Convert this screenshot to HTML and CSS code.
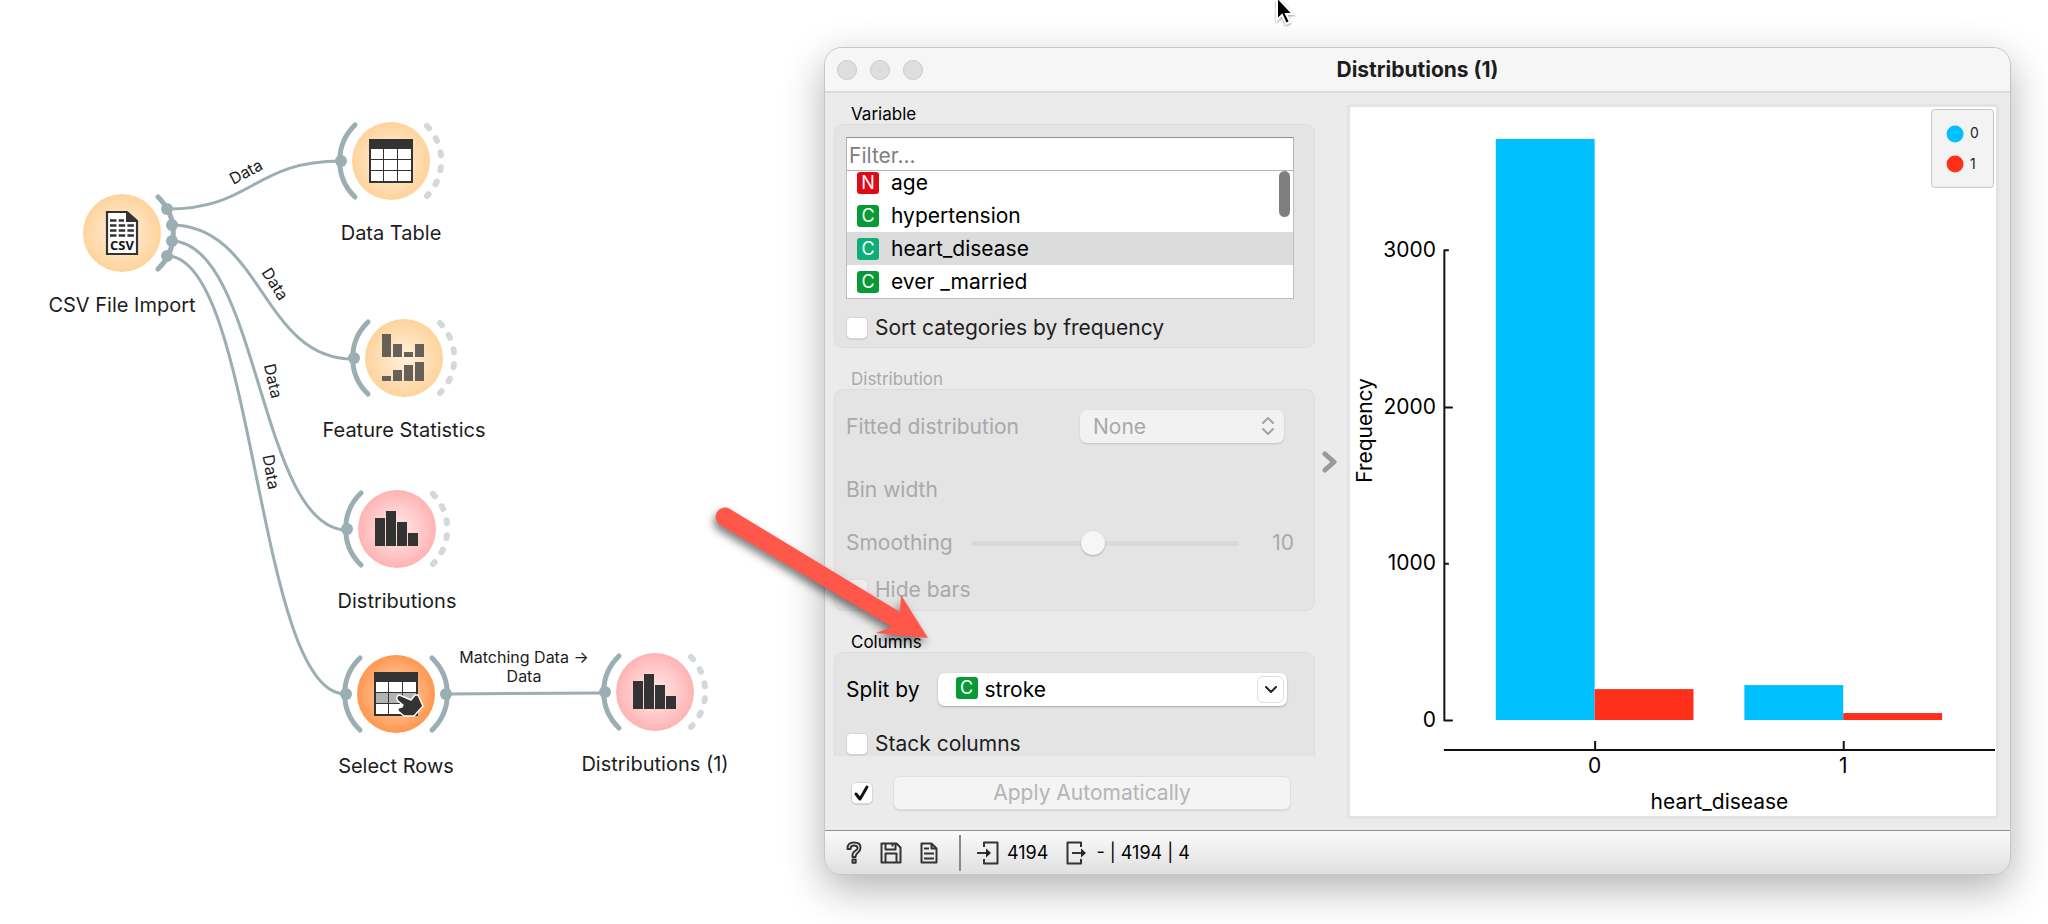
FILE: index.html
```html
<!DOCTYPE html>
<html lang="en">
<head>
<meta charset="utf-8">
<title>Distributions (1)</title>
<link rel="stylesheet" href="styles.css">
</head>
<body>
<main class="canvas">
  <svg class="defs" width="0" height="0" aria-hidden="true">
    <defs>
      <radialGradient id="g-data"><stop offset="0" stop-color="#fff0dc"/><stop offset="0.5" stop-color="#ffe2bd"/><stop offset="1" stop-color="#ffd39b"/></radialGradient>
      <radialGradient id="g-vis"><stop offset="0" stop-color="#ffe6e6"/><stop offset="0.5" stop-color="#ffd0d0"/><stop offset="1" stop-color="#ffb3b3"/></radialGradient>
      <radialGradient id="g-sel"><stop offset="0" stop-color="#ffd2ad"/><stop offset="0.5" stop-color="#ffb885"/><stop offset="1" stop-color="#ff9750"/></radialGradient>
      <g id="arc-in"><path class="arc" d="M24 14A50 50 0 0 0 24 86"/><circle class="dot" cx="10" cy="50" r="6"/></g>
      <path id="arc-empty" class="arc-empty" d="M96 15A50 50 0 0 1 96 85"/>
      <g id="bars" fill="#333"><rect x="38" y="39" width="10" height="28"/><rect x="49" y="32" width="10" height="35"/><rect x="60" y="43" width="10" height="24"/><rect x="71" y="54" width="10" height="13"/></g>
      <g id="sheet"><rect x="38" y="28" width="44" height="44" fill="#333"/><path fill="#fff" d="M40 38h12v10H40zM53 38h13v10H53zM67 38h13v10H67zM40 49h12v10H40zM53 49h13v10H53zM67 49h13v10H67zM40 60h12v10H40zM53 60h13v10H53zM67 60h13v10H67z"/></g>
    </defs>
  </svg>

  <svg class="links" width="820" height="924" aria-hidden="true">
    <path d="M167 209C253 209 253 161 341 161"/>
    <path d="M171 225C262 225 262 359 353 359"/>
    <path d="M171 241C259 241 259 530 347 530"/>
    <path d="M167 256C256 256 256 694 345 694"/>
    <path d="M446 694L604 693"/>
  </svg>

  <span class="link-label link-a">Data</span>
  <span class="link-label link-b">Data</span>
  <span class="link-label link-c">Data</span>
  <span class="link-label link-d">Data</span>
  <span class="link-label link-e">Matching Data →<br>Data</span>

  <figure class="node node-csv">
    <svg width="120" height="100" viewBox="0 0 120 100">
      <circle cx="60" cy="50" r="39" fill="url(#g-data)"/>
      <path class="arc" d="M96 14A50 50 0 0 1 96 86"/>
      <circle class="dot" cx="105" cy="26" r="6"/><circle class="dot" cx="110" cy="42" r="6"/><circle class="dot" cx="110" cy="58" r="6"/><circle class="dot" cx="105" cy="73" r="6"/>
      <path d="M45 29h20l10 9v33H45z" fill="#fff" stroke="#333" stroke-width="2.2"/>
      <path d="M64 28v11h12z" fill="#333"/>
      <path d="M48 37.500h14M48 42.500h24M48 47.500h24M48 52.500h24" stroke="#333" stroke-width="2.500" stroke-dasharray="6.500 2.200"/>
      <text class="csv-text" x="60" y="67" text-anchor="middle">CSV</text>
    </svg>
    <figcaption>CSV File Import</figcaption>
  </figure>

  <figure class="node node-table">
    <svg width="120" height="100" viewBox="0 0 120 100">
      <circle cx="60" cy="50" r="39" fill="url(#g-data)"/>
      <use href="#arc-in"/><use href="#arc-empty"/><use href="#sheet"/>
    </svg>
    <figcaption>Data Table</figcaption>
  </figure>

  <figure class="node node-stats">
    <svg width="120" height="100" viewBox="0 0 120 100">
      <circle cx="60" cy="50" r="39" fill="url(#g-data)"/>
      <use href="#arc-in"/><use href="#arc-empty"/>
      <path fill="#666059" d="M38 26h9v23h-9zM49 36h9v13h-9zM60 44h9v5h-9zM71 36h9v13h-9zM38 68h9v5h-9zM49 62h9v11h-9zM60 57h9v16h-9zM71 54h9v19h-9z"/>
    </svg>
    <figcaption>Feature Statistics</figcaption>
  </figure>

  <figure class="node node-dist">
    <svg width="120" height="100" viewBox="0 0 120 100">
      <circle cx="60" cy="50" r="39" fill="url(#g-vis)"/>
      <use href="#arc-in"/><use href="#arc-empty"/><use href="#bars"/>
    </svg>
    <figcaption>Distributions</figcaption>
  </figure>

  <figure class="node node-select">
    <svg width="120" height="100" viewBox="0 0 120 100">
      <circle cx="60" cy="50" r="39" fill="url(#g-sel)"/>
      <use href="#arc-in"/>
      <path class="arc" d="M96 14A50 50 0 0 1 96 86"/><circle class="dot" cx="110" cy="50" r="6"/>
      <use href="#sheet"/>
      <path fill="#b3b3b3" d="M40 49h12v10H40zM53 49h13v10H53zM67 49h13v10H67z"/>
      <path d="M61 53q1-3 5-1l9 4 4-5 3 0 5 11-9 10-10 0-6-5 0-3 4-1 1-2-5-4q-2-2-1-4z" fill="#333" stroke="#fff" stroke-width="1.500" stroke-linejoin="round"/>
    </svg>
    <figcaption>Select Rows</figcaption>
  </figure>

  <figure class="node node-dist1">
    <svg width="120" height="100" viewBox="0 0 120 100">
      <circle cx="60" cy="50" r="39" fill="url(#g-vis)"/>
      <use href="#arc-in"/><use href="#arc-empty"/><use href="#bars"/>
    </svg>
    <figcaption>Distributions (1)</figcaption>
  </figure>

  <section class="window" aria-label="Distributions (1)">
    <header class="titlebar">
      <div class="lights"><button class="light" aria-label="Close"></button><button class="light" aria-label="Minimize"></button><button class="light" aria-label="Zoom"></button></div>
      <h1>Distributions (1)</h1>
    </header>

    <div class="body">
      <div class="controls">
        <div class="groups">
          <h2>Variable</h2>
          <div class="group group-variable">
            <input class="filter" type="text" placeholder="Filter..." aria-label="Filter variables">
            <div class="list-wrap">
              <ul class="list">
                <li><span class="tag tag-n">N</span>age</li>
                <li><span class="tag">C</span>hypertension</li>
                <li class="selected"><span class="tag tag-sel">C</span>heart_disease</li>
                <li><span class="tag">C</span>ever _married</li>
              </ul>
              <span class="thumb"></span>
            </div>
            <label class="check"><input type="checkbox">Sort categories by frequency</label>
          </div>

          <h2 class="muted">Distribution</h2>
          <div class="group group-dist muted">
            <div class="row row-fit">
              <label for="fit">Fitted distribution</label>
              <span class="select-wrap fit-wrap">
                <select id="fit" disabled><option>None</option></select>
                <svg class="updown" width="12" height="20" viewBox="0 0 12 20"><path d="M1 7l5-5 5 5M1 13l5 5 5-5"/></svg>
              </span>
            </div>
            <div class="row row-bin">Bin width</div>
            <div class="row row-smooth">
              <label for="smooth">Smoothing</label>
              <input id="smooth" type="range" min="1" max="21" value="10" disabled>
              <output>10</output>
            </div>
            <label class="check"><input type="checkbox" disabled>Hide bars</label>
          </div>

          <h2>Columns</h2>
          <div class="group group-columns">
            <div class="row">
              <label for="split">Split by</label>
              <span class="select-wrap split-wrap">
                <span class="tag">C</span>
                <select id="split"><option>stroke</option></select>
                <span class="drop"><svg width="12" height="8" viewBox="0 0 12 8"><path d="M1 1l5 5 5-5"/></svg></span>
              </span>
            </div>
            <label class="check"><input type="checkbox">Stack columns</label>
          </div>
        </div>
        <div class="apply">
          <input type="checkbox" checked aria-label="Apply automatically">
          <button disabled>Apply Automatically</button>
        </div>
      </div>

      <button class="splitter" aria-label="Collapse controls"><svg width="16" height="22" viewBox="0 0 16 22"><path d="M3 3l9 8-9 8"/></svg></button>

      <div class="plot">
        <svg viewBox="0 0 647 709" role="img" aria-label="Frequency of heart_disease split by stroke">
          <g fill="#00bfff"><rect x="146" y="32" width="99" height="582"/><rect x="395" y="579" width="99" height="35"/></g>
          <g fill="#ff3019"><rect x="245" y="583" width="99" height="31"/><rect x="494" y="607" width="99" height="7"/></g>
          <g class="axis">
            <path d="M94.500 143V615M94 143.500h5M94 301h9M94 457.500h5M94 614.500h9"/>
            <path d="M94 644H646M245.500 635v9M494.500 635v9"/>
          </g>
          <g class="ticks" text-anchor="end"><text x="86" y="150">3000</text><text x="86" y="307">2000</text><text x="86" y="464">1000</text><text x="86" y="621">0</text></g>
          <g class="ticks" text-anchor="middle"><text x="245" y="667">0</text><text x="494" y="667">1</text><text x="370" y="703">heart_disease</text><text transform="translate(22 324) rotate(-90)">Frequency</text></g>
          <rect x="582.500" y="2.500" width="62" height="78" rx="3" fill="#f3f3f3" stroke="#c4c4c4"/>
          <circle cx="606" cy="27" r="8.500" fill="#00bfff"/><circle cx="606" cy="57" r="8.500" fill="#ff3019"/>
          <text class="legend" x="621" y="31">0</text><text class="legend" x="621" y="62">1</text>
        </svg>
      </div>
    </div>

    <footer class="status">
      <svg width="16" height="23" viewBox="0 0 16 23"><path d="M1.500 8Q1 1.500 8 1.500T14.500 7Q14.500 9.500 12 11.500T9.500 16H6.500Q6 12 9 10T11.500 7Q11.500 4.500 8 4.500T4.500 8z"/><rect x="6.500" y="18.500" width="3.200" height="3.200"/></svg>
      <svg width="22" height="22" viewBox="0 0 22 22"><path d="M1.500 1.500h15l4 4v15h-19zM5.500 1.500v6h10v-6M12.500 1.500v3M5.500 20V11.500h11V20"/></svg>
      <svg width="18" height="22" viewBox="0 0 18 22"><path d="M1.500 1.500h10l5 5v14h-15zM11.500 1.500v5h5M4 6.500h5M4 11.500h10M4 16.500h10"/></svg>
      <span class="rule"></span>
      <svg class="io" width="22" height="24" viewBox="0 0 22 24"><path d="M7 6V1.500h13.500v21H7V18M0 12h12"/><path class="head" d="M9 7.500l5 4.500-5 4.500z"/></svg>
      <span class="count">4194</span>
      <svg class="io" width="22" height="24" viewBox="0 0 22 24"><path d="M15 6V1.500H1.500v21H15V18M6 12h12"/><path class="head" d="M15 7.500l5 4.500-5 4.500z"/></svg>
      <span>- | 4194 | 4</span>
    </footer>
  </section>

  <svg class="pointer-arrow" width="240" height="160" viewBox="0 0 240 160" aria-hidden="true"><path d="M30 19L200 122 201 105 228 148 176 143 192 137 20 35A9 9 0 0 1 30 19z"/></svg>
  <svg class="cursor" width="22" height="30" viewBox="0 0 22 30" aria-hidden="true"><path d="M3-3V20l5-5 4 9 4-2-4-8h7z"/></svg>
</main>
</body>
</html>
```
FILE: styles.css
```css
* { box-sizing: border-box; }
body { margin: 0; background: #fff; color: #1d1d1d; font: 21px/24px Inter, "Liberation Sans", sans-serif; }
h1, h2, ul, figure { margin: 0; padding: 0; }
button, input, select { font: inherit; color: inherit; margin: 0; }
.canvas { position: relative; min-height: 100vh; overflow: hidden; }
.defs, .links { position: absolute; left: 0; top: 0; }
.links path { fill: none; stroke: #9aaeb4; stroke-width: 3; }
.arc { fill: none; stroke: #9aaeb4; stroke-width: 5; stroke-linecap: round; }
.arc-empty { fill: none; stroke: #d3d9db; stroke-width: 6; stroke-linecap: round; stroke-dasharray: 3 12; }
.dot { fill: #9aaeb4; }
.csv-text { font: bold 13px "Open Sans", sans-serif; fill: #111; }

/* workflow nodes */
.node { position: absolute; width: 180px; text-align: center; font-size: 20px; }
.node svg { display: block; margin: 0 auto 10px; }
.node-csv { left: 32px; top: 183px; }
.node-table { left: 301px; top: 111px; }
.node-stats { left: 314px; top: 308px; }
.node-dist { left: 307px; top: 479px; }
.node-select { left: 306px; top: 644px; }
.node-dist1 { left: 565px; top: 642px; }
.link-label { position: absolute; font-size: 16px; line-height: 19px; text-align: center; white-space: nowrap; transform: translate(-50%, -50%) rotate(var(--turn, 0deg)); }
.link-a { left: 246px; top: 172px; --turn: -28deg; }
.link-b { left: 275px; top: 284px; --turn: 58deg; }
.link-c { left: 273px; top: 381px; --turn: 77deg; }
.link-d { left: 271px; top: 472px; --turn: 80deg; }
.link-e { left: 524px; top: 667px; }

/* window */
.window { position: absolute; left: 824px; right: 37px; top: 47px; border: 1px solid #c6c6c6; border-radius: 18px; background: #ebebeb; overflow: hidden; box-shadow: 0 14px 40px rgba(0, 0, 0, .3); }
.titlebar { display: grid; grid-template-columns: 1fr auto 1fr; align-items: center; height: 45px; padding: 0 12px; background: #f6f6f6; border-bottom: 2px solid #dadada; }
.titlebar h1 { font-size: 21px; line-height: 24px; font-weight: 700; }
.lights { display: flex; gap: 13px; }
.light { width: 20px; height: 20px; padding: 0; border: 1px solid #cacaca; border-radius: 50%; background: #dedede; }
.body { display: flex; align-items: stretch; }
.controls { flex: 0 0 490px; padding-left: 9px; }
.groups { overflow: hidden; padding-top: 11px; }
.groups h2 { padding: 0 17px; font-size: 17px; line-height: 20px; font-weight: 400; color: #000; }
.group { margin-bottom: 21px; padding: 0 20px 0 11px; border: 1px solid #dcdcdc; border-radius: 9px; background: #e4e4e4; }
.groups .muted { color: #a9a9a9; }
.group-variable { padding-top: 12px; padding-bottom: 8px; }
.filter { display: block; width: 100%; height: 34px; padding: 2px 2px 0; border: 1px solid #b5b5b5; border-top-color: #8f8f8f; background: #fff; outline: 0; }
.filter::placeholder { color: #808080; opacity: 1; }
.list-wrap { position: relative; margin-bottom: 18px; }
.list { display: flex; flex-direction: column; justify-content: flex-end; height: 128px; overflow: hidden; border: 1px solid #bdbdbd; border-top: 0; background: #fff; color: #000; list-style: none; }
.list li { display: flex; flex: none; align-items: center; gap: 12px; height: 33px; padding-left: 10px; }
.list .selected { background: #dcdcdc; }
.thumb { position: absolute; right: 4px; top: 0; width: 11px; height: 46px; border-radius: 6px; background: #7f7f7f; }
.tag { display: inline-block; width: 22px; height: 22px; border-radius: 3px; background: #079a37; color: #fff; font: 18px/22px Inter, sans-serif; text-align: center; }
.tag-n { background: #e00a16; }
.tag-sel { background: #0caf77; }
.check { display: flex; align-items: center; gap: 7px; height: 22px; }
input[type="checkbox"] { appearance: none; flex: none; width: 22px; height: 22px; border-radius: 5px; border: 1px solid #d6d6d6; background: #fff; box-shadow: 0 1px 1px rgba(0, 0, 0, .1); }
input[type="checkbox"]:disabled { background: #efefef; border-color: #dedede; }
.apply input[type="checkbox"]:checked { background: #fff url("data:image/svg+xml,%3Csvg xmlns='http://www.w3.org/2000/svg' viewBox='0 0 20 20'%3E%3Cpath d='M4 11l4 5 7-12' fill='none' stroke='%23111' stroke-width='3' stroke-linecap='round' stroke-linejoin='round'/%3E%3C/svg%3E") center / 20px no-repeat; }
.row { display: flex; align-items: center; }
.group-dist { padding-top: 20px; padding-bottom: 9px; }
.row-fit { justify-content: space-between; padding-right: 10px; margin-bottom: 35px; }
.select-wrap { position: relative; display: block; }
select { appearance: none; width: 100%; height: 33px; border: 0; border-radius: 7px; outline: 0; background: #fff; box-shadow: 0 1px 2px rgba(0, 0, 0, .28); }
select:disabled { padding-left: 13px; background: #f2f2f2; opacity: 1; color: #a9a9a9; box-shadow: 0 1px 2px rgba(0, 0, 0, .15); }
.fit-wrap { width: 204px; }
.updown { position: absolute; right: 10px; top: 6px; fill: none; stroke: #a3a3a3; stroke-width: 2; stroke-linecap: round; stroke-linejoin: round; }
.row-bin { margin-bottom: 29px; }
.row-smooth { margin-bottom: 24px; }
.row-smooth input { appearance: none; flex: 1; min-width: 0; height: 24px; margin: 0 33px 0 18px; background: none; }
.row-smooth input::-webkit-slider-runnable-track { height: 5px; border-radius: 3px; background: #d9d9d9; }
.row-smooth input::-webkit-slider-thumb { appearance: none; width: 24px; height: 24px; margin-top: -10px; border-radius: 50%; background: #f6f6f6; box-shadow: 0 1px 2px rgba(0, 0, 0, .25); }
.group-columns { height: 104px; margin-bottom: 0; padding-top: 20px; border-bottom: 0; border-radius: 9px 9px 0 0; }
.group-columns .row { gap: 18px; margin-right: 7px; margin-bottom: 27px; color: #000; }
.split-wrap { flex: 1; }
.split-wrap select { padding-left: 47px; color: #000; }
.split-wrap .tag { position: absolute; left: 18px; top: 4px; }
.drop { position: absolute; right: 3px; top: 3px; display: grid; place-items: center; width: 27px; height: 27px; border: 1px solid #dedede; border-radius: 6px; background: #fff; pointer-events: none; }
.drop path { fill: none; stroke: #222; stroke-width: 2; stroke-linecap: round; stroke-linejoin: round; }
.apply { display: flex; align-items: center; gap: 20px; padding: 20px 24px 20px 17px; }
.apply button { flex: 1; height: 34px; border: 1px solid #dfdfdf; border-radius: 7px; background: #f4f4f4; color: #b4b4b4; box-shadow: 0 1px 1px rgba(0, 0, 0, .08); }
.splitter { flex: 0 0 30px; display: grid; place-items: center; padding: 0; border: 0; background: none; }
.splitter path { fill: none; stroke: #9a9a9a; stroke-width: 5; stroke-linecap: round; stroke-linejoin: round; }
.plot { flex: 1; min-width: 0; margin: 11px 11px 11px 2px; border: 3px solid #e3e3e3; border-radius: 4px; background: #fff; }
.plot svg { display: block; width: 100%; height: auto; }
.axis path { fill: none; stroke: #111; stroke-width: 2; }
.ticks { font-size: 21px; fill: #000; }
.legend { font-size: 14px; fill: #222; }
.status { display: flex; align-items: center; height: 44px; padding-left: 21px; border-top: 1px solid #8f8f8f; background: linear-gradient(#fafafa, #e0e0e0); color: #000; font-size: 18px; }
.status svg { margin-right: 18px; fill: none; stroke: #333; stroke-width: 2; stroke-linejoin: round; }
.status .rule { width: 2px; height: 36px; margin: 0 16px 0 3px; background: #8a8a8a; }
.status .io { margin-right: 8px; }
.status .io .head { fill: #222; stroke: none; }
.status .count { margin-right: 18px; }

/* annotation and mouse pointer */
.pointer-arrow { position: absolute; left: 700px; top: 490px; fill: #ff584a; filter: drop-shadow(-2px 5px 4px rgba(0, 0, 0, .5)); }
.cursor { position: absolute; left: 1274px; top: 0; fill: #000; stroke: #fff; stroke-width: 2; filter: drop-shadow(0 1px 1px rgba(0, 0, 0, .4)); }
```
